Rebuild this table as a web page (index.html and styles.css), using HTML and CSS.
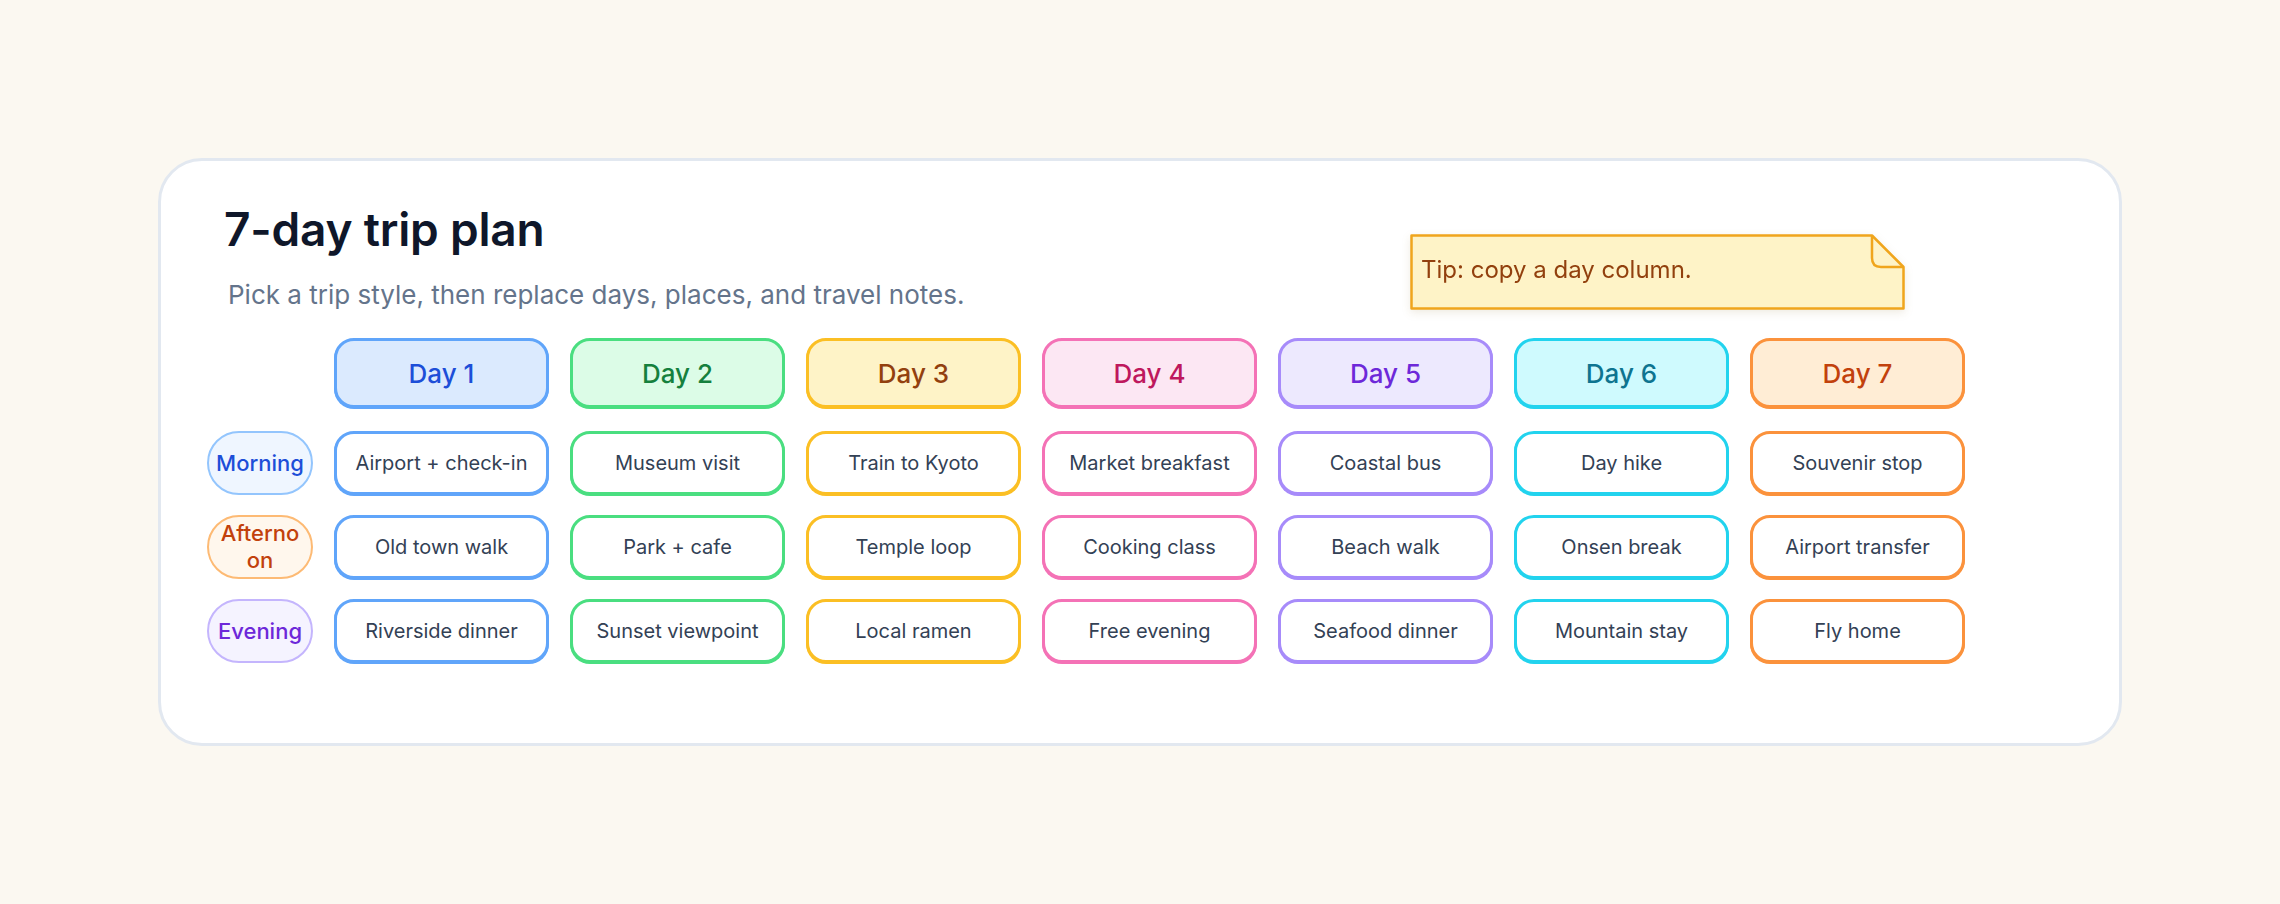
FILE: index.html
```html
<!DOCTYPE html>
<html lang="en">
<head>
<meta charset="utf-8">
<title>7-day trip plan</title>
<link rel="stylesheet" href="styles.css">
</head>
<body>
<main class="page">
  <section class="card">
    <header class="card-head">
      <h1 class="title">7-day trip plan</h1>
      <p class="subtitle">Pick a trip style, then replace days, places, and travel notes.</p>
    </header>

    <aside class="tip">
      <svg class="tip-shape" viewBox="0 0 495 76" preserveAspectRatio="none" aria-hidden="true">
        <path d="M1.5 1.5 H462 L493.5 33 V74.5 H1.5 Z" fill="#fef3c7" stroke="#f0a51c" stroke-width="2.5" stroke-linejoin="round"/>
        <path d="M462 1.5 V24 Q462 33 471 33 H493.5" fill="none" stroke="#f0a51c" stroke-width="2.5" stroke-linejoin="round"/>
      </svg>
      <span class="tip-text">Tip: copy a day column.</span>
    </aside>

    <div class="plan">
      <div class="corner"></div>
      <div class="day d1">Day 1</div>
      <div class="day d2">Day 2</div>
      <div class="day d3">Day 3</div>
      <div class="day d4">Day 4</div>
      <div class="day d5">Day 5</div>
      <div class="day d6">Day 6</div>
      <div class="day d7">Day 7</div>

      <div class="slot morning">Morning</div>
      <div class="cell d1">Airport + check-in</div>
      <div class="cell d2">Museum visit</div>
      <div class="cell d3">Train to Kyoto</div>
      <div class="cell d4">Market breakfast</div>
      <div class="cell d5">Coastal bus</div>
      <div class="cell d6">Day hike</div>
      <div class="cell d7">Souvenir stop</div>

      <div class="slot afternoon">Afternoon</div>
      <div class="cell d1">Old town walk</div>
      <div class="cell d2">Park + cafe</div>
      <div class="cell d3">Temple loop</div>
      <div class="cell d4">Cooking class</div>
      <div class="cell d5">Beach walk</div>
      <div class="cell d6">Onsen break</div>
      <div class="cell d7">Airport transfer</div>

      <div class="slot evening">Evening</div>
      <div class="cell d1">Riverside dinner</div>
      <div class="cell d2">Sunset viewpoint</div>
      <div class="cell d3">Local ramen</div>
      <div class="cell d4">Free evening</div>
      <div class="cell d5">Seafood dinner</div>
      <div class="cell d6">Mountain stay</div>
      <div class="cell d7">Fly home</div>
    </div>
  </section>
</main>
</body>
</html>
```

FILE: styles.css
```css
* {
  box-sizing: border-box;
}

html, body {
  margin: 0;
  padding: 0;
}

body {
  background: #fbf8f1;
  font-family: Inter, "Noto Sans", "Liberation Sans", sans-serif;
  color: #0f172a;
}

.page {
  min-height: 100vh;
  display: flex;
  align-items: center;
  justify-content: center;
}

.card {
  position: relative;
  width: 1964px;
  background: #ffffff;
  border: 3px solid #e2e8f0;
  border-radius: 44px;
  padding: 40px 46px 80px 46px;
}

.card-head {
  padding-left: 17px;
}

.title {
  margin: 0;
  font-size: 46px;
  line-height: 56px;
  font-weight: 600;
  color: #0f172a;
  letter-spacing: -0.2px;
}

.subtitle {
  margin: 22px 0 0 4px;
  font-size: 26px;
  line-height: 32px;
  font-weight: 400;
  color: #64748b;
}

/* sticky tip note */
.tip {
  position: absolute;
  left: 1249px;
  top: 73px;
  width: 495px;
  height: 76px;
  display: flex;
  align-items: center;
  padding: 0 0 4px 11px;
  filter: drop-shadow(0 3px 4px rgba(120, 90, 20, 0.12));
}

.tip-shape {
  position: absolute;
  inset: 0;
  width: 100%;
  height: 100%;
}

.tip-text {
  position: relative;
  font-size: 24px;
  line-height: 30px;
  color: #92400e;
}

/* plan grid */
.plan {
  margin-top: 27px;
  display: grid;
  grid-template-columns: 106px repeat(7, 215px);
  grid-template-rows: 73px 64px 64px 64px;
  column-gap: 21px;
  row-gap: 20px;
}

.day {
  height: 70px;
  display: flex;
  align-items: center;
  justify-content: center;
  border: 3px solid var(--bd);
  border-radius: 20px;
  background: var(--fill);
  color: var(--ink);
  font-size: 26px;
  font-weight: 450;
  box-shadow: 0 1px 0 var(--bd);
}

.cell {
  display: flex;
  align-items: center;
  justify-content: center;
  text-align: center;
  border: 3px solid var(--bd);
  border-radius: 20px;
  background: #ffffff;
  color: #334155;
  font-size: 20px;
  line-height: 26px;
  box-shadow: 0 1px 0 var(--bd);
}

.slot {
  display: flex;
  align-items: center;
  justify-content: center;
  text-align: center;
  border: 2.5px solid var(--bd);
  border-radius: 32px;
  background: var(--fill);
  color: var(--ink);
  font-size: 22px;
  line-height: 27px;
  font-weight: 500;
  padding: 0 7px;
  overflow-wrap: anywhere;
}

.morning   { --bd: #93c5fd; --fill: #eff6ff; --ink: #1d4ed8; }
.afternoon { --bd: #fdba74; --fill: #fff7ed; --ink: #c2410c; }
.evening   { --bd: #c4b5fd; --fill: #f5f3ff; --ink: #6d28d9; }

.d1 { --bd: #60a5fa; --fill: #dbeafe; --ink: #1d4ed8; }
.d2 { --bd: #4ade80; --fill: #dcfce7; --ink: #15803d; }
.d3 { --bd: #fbbf24; --fill: #fef3c7; --ink: #92400e; }
.d4 { --bd: #f472b6; --fill: #fce7f3; --ink: #be185d; }
.d5 { --bd: #a78bfa; --fill: #ede9fe; --ink: #6d28d9; }
.d6 { --bd: #22d3ee; --fill: #cffafe; --ink: #0e7490; }
.d7 { --bd: #fb923c; --fill: #ffedd5; --ink: #c2410c; }
```
